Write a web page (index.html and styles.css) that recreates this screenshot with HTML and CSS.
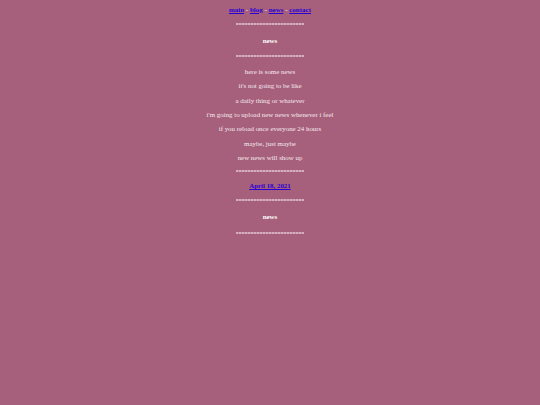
FILE: index.html
```html
<!DOCTYPE html>
<html>
<head>
<meta charset="utf-8">
<title>news</title>
<link rel="stylesheet" href="styles.css">
</head>
<body>
<div class="page">
  <div class="nav"><a href="#">main</a> - <a href="#">blog</a> - <a href="#">news</a> - <a href="#">contact</a></div>
  <div class="sep s1"></div>
  <div class="title t1">news</div>
  <div class="sep s2"></div>
  <div class="posts">
    <div class="line">here is some news</div>
    <div class="line">it's not going to be like</div>
    <div class="line">a daily thing or whatever</div>
    <div class="line">i'm going to upload new news whenever i feel</div>
    <div class="line">if you reload once everyone 24 hours</div>
    <div class="line">maybe, just maybe</div>
    <div class="line">new news will show up</div>
  </div>
  <div class="sep s3"></div>
  <div class="date"><a href="#">April 18, 2021</a></div>
  <div class="sep s4"></div>
  <div class="title t2">news</div>
  <div class="sep s5"></div>
</div>
</body>
</html>
```
FILE: styles.css
```css
html, body {
  margin: 0;
  padding: 0;
  background: #a6607b;
}
.page {
  display: flex;
  flex-direction: column;
  align-items: center;
  font-family: "Liberation Serif", "Times New Roman", serif;
  font-size: 6.9px;
  color: #f6e8ee;
  text-align: center;
}
a {
  color: #2a00d6;
  text-decoration: underline;
}
.nav {
  margin-top: 3px;
  height: 14px;
  line-height: 14px;
  font-weight: bold;
  font-size: 7px;
  color: #f6e8ee;
}
.sep {
  width: 68px;
  height: 2px;
  background: repeating-linear-gradient(90deg, #d6adbe 0 2px, #c48ca3 2px 3px);
}
.s1 { margin-top: 6px; }
.title {
  height: 14px;
  line-height: 14px;
  font-weight: bold;
  color: #ffffff;
}
.t1 { margin-top: 9px; }
.s2 { margin-top: 7px; }
.posts {
  margin-top: 8px;
  display: flex;
  flex-direction: column;
}
.line {
  height: 14.33px;
  line-height: 14.33px;
}
.s3 { margin-top: 5px; }
.date {
  margin-top: 7px;
  height: 14px;
  line-height: 14px;
  font-weight: bold;
}
.s4 { margin-top: 6px; }
.t2 { margin-top: 9px; }
.s5 { margin-top: 8px; }
```
